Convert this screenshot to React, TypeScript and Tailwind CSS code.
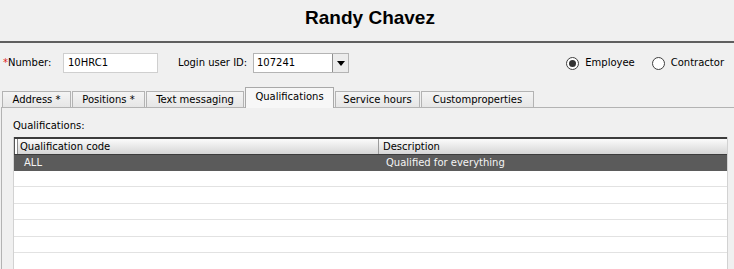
// App.tsx
const tabs = [
  { label: "Address *", w: "w-[69px]" },
  { label: "Positions *", w: "w-[73px]" },
  { label: "Text messaging", w: "w-[98px]" },
  { label: "Qualifications", w: "w-[89px]", active: true },
  { label: "Service hours", w: "w-[85px]" },
  { label: "Customproperties", w: "w-[113px]" },
];

// alternating heights keep the row lines where the original grid puts them
const emptyRows = ["h-[16px]", "h-[17px]", "h-[16px]", "h-[17px]", "h-[16px]", "h-[17px]"];

function Radio({ label, checked }: { label: string; checked?: boolean }) {
  return (
    <label className="flex items-center gap-[6px]">
      <span className="flex h-[13px] w-[13px] items-center justify-center rounded-full border border-[#3f3f3f] bg-white">
        {checked && <span className="h-[7px] w-[7px] rounded-full bg-[#333333]" />}
      </span>
      <span>{label}</span>
    </label>
  );
}

export default function App() {
  return (
    <div className="h-[269px] w-[734px] overflow-hidden bg-[#f0f0f0] font-['DejaVu_Sans',sans-serif] text-[10px] leading-[12px] text-black">
      {/* Title */}
      <div className="h-[43px] border-b-2 border-[#5f5f5f] pl-[6px] pt-[7px] text-center font-['Liberation_Sans',Arial,sans-serif] text-[19px] font-bold leading-[22px]">
        Randy Chavez
      </div>

      {/* Form row */}
      <div className="mt-[10px] flex h-[20px] items-center pl-[3px] pr-[10px]">
        <div className="w-[60px]">
          <span className="text-[#e02020]">*</span>Number:
        </div>
        <div className="flex h-[20px] w-[95px] items-center border border-[#cfcfcf] bg-white pl-[4px]">
          10HRC1
        </div>
        <div className="ml-[20px] w-[75px]">Login user ID:</div>
        <div className="flex h-[20px] w-[96px] items-center border border-[#b4b4b4] bg-white">
          <span className="flex-1 pl-[3px]">107241</span>
          <span className="flex h-full w-[16px] items-center justify-center border-l border-[#8f8f8f] bg-[#ececec]">
            <svg width="8" height="5" viewBox="0 0 8 5">
              <path d="M0 0 H8 L4 5 Z" fill="#000" />
            </svg>
          </span>
        </div>
        <div className="ml-auto flex items-center">
          <Radio label="Employee" checked />
          <div className="ml-[17px]">
            <Radio label="Contractor" />
          </div>
        </div>
      </div>

      {/* Tabs */}
      <div className="mt-[14px] flex h-[20px] items-start gap-[1px] pl-[2px]">
        {tabs.map((t) =>
          t.active ? (
            <div
              key={t.label}
              className={`relative z-10 flex h-[21px] ${t.w} items-center justify-center border border-b-0 border-[#a9a9a9] bg-[#f7f7f7] pb-[2px]`}
            >
              {t.label}
            </div>
          ) : (
            <div
              key={t.label}
              className={`mt-[4px] flex h-[16px] ${t.w} items-center justify-center border border-b-0 border-[#b3b3b3] bg-gradient-to-b from-[#f4f4f4] to-[#e6e6e6]`}
            >
              {t.label}
            </div>
          )
        )}
      </div>

      {/* Panel */}
      <div className="ml-[1px] h-[200px] border-l border-t border-[#b3b3b3] pl-[11px] pt-[12px]">
        <div>Qualifications:</div>

        <div className="mt-[5px] w-[715px] border-l border-r border-[#d2d2d2]">
          {/* Header */}
          <div className="flex h-[18px] border-b border-t-2 border-[#3c3c3c] bg-gradient-to-b from-[#fbfbfb] to-[#d6d6d6]">
            <div className="flex w-[365px] items-center border-r border-[#9c9c9c]">
              <span className="h-full w-[4px] border-l border-r border-l-[#555555] border-r-[#8a8a8a] bg-white" />
              <span className="pl-[2px]">Qualification code</span>
            </div>
            <div className="flex flex-1 items-center pl-[4px]">Description</div>
          </div>

          {/* Selected row */}
          <div className="flex h-[16px] items-center bg-[#5b5b5b] text-[#f4f4f4]">
            <div className="w-[366px] pl-[10px]">ALL</div>
            <div className="flex-1 pl-[6px]">Qualified for everything</div>
          </div>

          {emptyRows.map((h, i) => (
            <div key={i} className={`${h} border-b border-[#e2e2e2] bg-white`} />
          ))}
        </div>
      </div>
    </div>
  );
}
